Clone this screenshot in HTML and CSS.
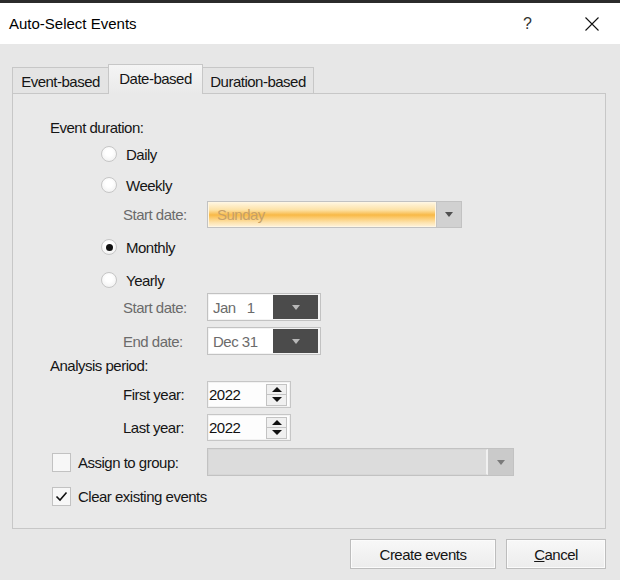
FILE: index.html
```html
<!DOCTYPE html>
<html>
<head>
<meta charset="utf-8">
<title>Auto-Select Events</title>
<link rel="stylesheet" href="styles.css">
</head>
<body>
<div class="window">
  <div class="titlebar">
    <span class="title">Auto-Select Events</span>
    <span class="help">?</span>
    <span class="close"><svg width="14" height="14" viewBox="0 0 14 14"><path d="M0.5 0.5L13.5 13.5M13.5 0.5L0.5 13.5" stroke="#111" stroke-width="1.1" fill="none"/></svg></span>
  </div>

  <div class="tabs">
    <div class="tab tab-event">Event-based</div>
    <div class="tab tab-date active">Date-based</div>
    <div class="tab tab-duration">Duration-based</div>
  </div>

  <div class="panel">
    <div class="heading">Event duration:</div>

    <div class="options">
      <div class="radio-row mt7"><span class="radio"></span>Daily</div>
      <div class="radio-row mt11"><span class="radio"></span>Weekly</div>
      <div class="field-row mt6">
        <span class="field-label disabled">Start date:</span>
        <div class="combo combo-orange">
          <span class="value">Sunday</span>
          <span class="arrow"><span class="tri"></span></span>
        </div>
      </div>
      <div class="radio-row mt9"><span class="radio checked"></span>Monthly</div>
      <div class="radio-row mt13"><span class="radio"></span>Yearly</div>
      <div class="field-row mt3">
        <span class="field-label disabled">Start date:</span>
        <div class="combo combo-dark">
          <span class="value">Jan   1</span>
          <span class="arrow"><span class="tri tri-light"></span></span>
        </div>
      </div>
      <div class="field-row mt6">
        <span class="field-label disabled">End date:</span>
        <div class="combo combo-dark">
          <span class="value">Dec 31</span>
          <span class="arrow"><span class="tri tri-light"></span></span>
        </div>
      </div>
    </div>

    <div class="heading">Analysis period:</div>

    <div class="options">
      <div class="field-row mt6">
        <span class="field-label">First year:</span>
        <div class="spin">
          <span class="value">2022</span>
          <span class="spin-btns"><span class="spin-btn"><span class="tri-up"></span></span><span class="spin-btn"><span class="tri-down"></span></span></span>
        </div>
      </div>
      <div class="field-row mt6">
        <span class="field-label">Last year:</span>
        <div class="spin">
          <span class="value">2022</span>
          <span class="spin-btns"><span class="spin-btn"><span class="tri-up"></span></span><span class="spin-btn"><span class="tri-down"></span></span></span>
        </div>
      </div>
    </div>

    <div class="check-row mt7">
      <span class="checkbox"></span>
      <span class="check-label">Assign to group:</span>
      <div class="combo combo-group">
        <span class="value"></span>
        <span class="arrow"><span class="tri tri-mid"></span></span>
      </div>
    </div>
    <div class="check-row short mt10">
      <span class="checkbox"><svg width="17" height="17" viewBox="0 0 17 17"><path d="M3.5 8.5L7 12L13.5 4.5" stroke="#111" stroke-width="1.6" fill="none"/></svg></span>
      <span class="check-label">Clear existing events</span>
    </div>
  </div>

  <div class="buttons">
    <button class="btn btn-create">Create events</button>
    <button class="btn btn-cancel"><u>C</u>ancel</button>
  </div>
</div>
</body>
</html>
```

FILE: styles.css
```css
* { box-sizing: border-box; }

html, body {
  margin: 0;
  padding: 0;
}

body {
  width: 620px;
  height: 580px;
  overflow: hidden;
  background: #e7e7e7;
  font-family: "Liberation Sans", Arial, sans-serif;
  font-size: 15px;
  letter-spacing: -0.5px;
  color: #151515;
}

.window {
  height: 580px;
  border-top: 3px solid #2b2b2b;
  display: flex;
  flex-direction: column;
}

/* Title bar */
.titlebar {
  height: 41px;
  flex: none;
  background: #ffffff;
  display: flex;
  align-items: center;
  padding-left: 9px;
}

.title {
  flex: 1;
  letter-spacing: 0;
  color: #000;
}

.help {
  font-size: 16px;
  letter-spacing: 0;
  color: #333;
  margin-right: 53px;
}

.close {
  width: 14px;
  height: 14px;
  margin-right: 21px;
  display: flex;
}

/* Tabs */
.tabs {
  display: flex;
  align-items: flex-end;
  height: 29px;
  flex: none;
  margin-top: 20px;
  padding-left: 12px;
}

.tab {
  height: 26px;
  border: 1px solid #c7c7c7;
  border-bottom: none;
  background: #e4e4e4;
  display: flex;
  align-items: center;
  justify-content: center;
  padding-top: 2px;
}

.tab + .tab { margin-left: -1px; }

.tab-event { width: 97px; }
.tab-duration { width: 112px; }

.tab-date {
  width: 95px;
  height: 30px;
  margin-bottom: -1px;
  padding-top: 0;
  padding-bottom: 3px;
  background: linear-gradient(#f5f5f5, #e9e9e9);
  position: relative;
  z-index: 1;
}

/* Panel */
.panel {
  margin-left: 12px;
  width: 594px;
  height: 436px;
  flex: none;
  border: 1px solid #c7c7c7;
  background: #e9e9e9;
  display: flex;
  flex-direction: column;
  padding-top: 23px;
}

.heading {
  height: 20px;
  display: flex;
  align-items: center;
  padding-left: 37px;
}

.options {
  display: flex;
  flex-direction: column;
  padding-left: 88px;
}

.mt3 { margin-top: 3px; }
.mt6 { margin-top: 6px; }
.mt7 { margin-top: 7px; }
.mt9 { margin-top: 9px; }
.mt10 { margin-top: 10px; }
.mt11 { margin-top: 11px; }
.mt13 { margin-top: 13px; }

.radio-row {
  height: 20px;
  display: flex;
  align-items: center;
}

.radio {
  width: 16px;
  height: 16px;
  border-radius: 50%;
  border: 1px solid #c6c6c6;
  background: radial-gradient(circle at 50% 40%, #ffffff 30%, #ececec 100%);
  margin-right: 9px;
  display: flex;
  align-items: center;
  justify-content: center;
}

.radio.checked::after {
  content: "";
  width: 7px;
  height: 7px;
  border-radius: 50%;
  background: #111;
}

.field-row {
  display: flex;
  align-items: center;
  padding-left: 22px;
}

.field-label { width: 84px; }

.disabled { color: #6b6b6b; }

/* Combos */
.combo {
  display: flex;
  border: 1px solid #c2c2c2;
}

.combo .value {
  flex: 1;
  display: flex;
  align-items: center;
}

.combo .arrow {
  display: flex;
  align-items: center;
  justify-content: center;
}

.tri {
  width: 0;
  height: 0;
  border-left: 4.5px solid transparent;
  border-right: 4.5px solid transparent;
  border-top: 5px solid #505050;
}

.tri-light { border-top-color: #b8b8b8; }
.tri-mid { border-top-color: #7a7a7a; }

.combo-orange {
  width: 255px;
  height: 27px;
}

.combo-orange .value {
  background: linear-gradient(#fff4dc 0%, #fde2a6 30%, #f8b947 52%, #fbc766 62%, #fde3ae 85%, #fff0d2 100%);
  border: 1px solid #fff6e2;
  color: #c6a067;
  padding-left: 8px;
}

.combo-orange .arrow {
  width: 25px;
  background: #d1d1d1;
  border-left: 1px solid #c4c4c4;
}

.combo-dark {
  width: 114px;
  height: 28px;
  padding: 1px 2px 1px 1px;
  background: #f3f3f3;
}

.combo-dark .value {
  background: #ffffff;
  color: #6b6b6b;
  padding-left: 4px;
  white-space: pre;
}

.combo-dark .arrow {
  width: 45px;
  background: #4b4b4b;
}

.combo-group {
  width: 307px;
  height: 28px;
}

.combo-group .value {
  background: #dcdcdc;
  border: 1px solid #d6d6d6;
  border-right: 2px solid #f1f1f1;
}

.combo-group .arrow {
  width: 25px;
  background: #cacaca;
}

/* Spinner */
.spin {
  width: 84px;
  height: 27px;
  border: 1px solid #c6c6c6;
  box-shadow: inset 0 0 0 1px #f2f2f2;
  background: #fdfdfd;
  display: flex;
  align-items: center;
  padding: 0 3px 0 1px;
  color: #111;
}

.spin .value { flex: 1; }

.spin-btns {
  width: 21px;
  height: 22px;
  display: flex;
  flex-direction: column;
}

.spin-btn {
  flex: 1;
  border: 1px solid #c3c3c3;
  background: #f0f0f0;
  display: flex;
  align-items: center;
  justify-content: center;
}

.spin-btn + .spin-btn { margin-top: -1px; }

.tri-up, .tri-down {
  width: 0;
  height: 0;
  border-left: 5px solid transparent;
  border-right: 5px solid transparent;
}

.tri-up { border-bottom: 5px solid #111; }
.tri-down { border-top: 5px solid #111; }

/* Checkboxes */
.check-row {
  height: 28px;
  display: flex;
  align-items: center;
  padding-left: 39px;
}

.check-row.short { height: 20px; }

.checkbox {
  width: 19px;
  height: 19px;
  border: 1px solid #c2c2c2;
  background: #f7f7f7;
  margin-right: 7px;
  display: flex;
  align-items: center;
  justify-content: center;
}

.check-label { width: 129px; white-space: nowrap; }

/* Buttons */
.buttons {
  display: flex;
  justify-content: flex-end;
  gap: 10px;
  padding-right: 14px;
  margin-top: 10px;
}

.btn {
  height: 30px;
  border: 1px solid #bdbdbd;
  background: linear-gradient(#f8f8f8, #ececec);
  box-shadow: inset 0 0 0 1px #fbfbfb;
  font: inherit;
  letter-spacing: -0.5px;
  color: #151515;
  padding: 0;
}

.btn-create { width: 146px; }
.btn-cancel { width: 100px; }
```
